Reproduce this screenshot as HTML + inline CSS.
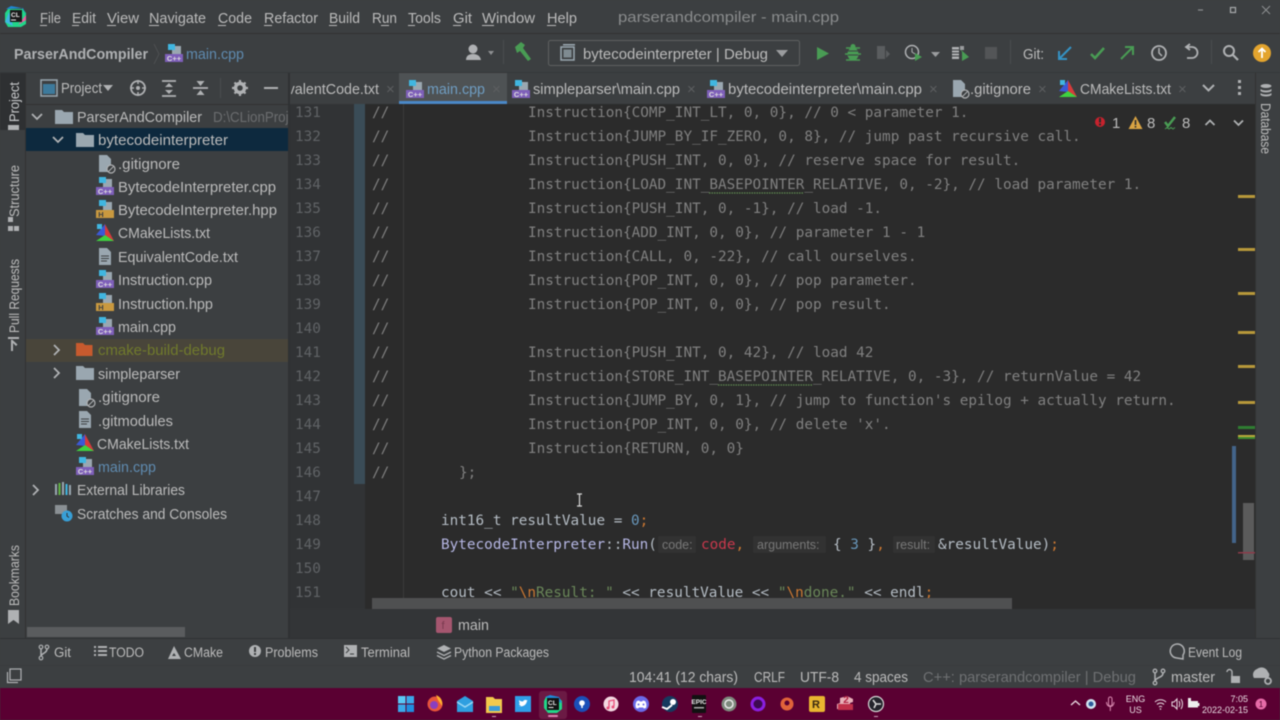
<!DOCTYPE html>
<html><head><meta charset="utf-8"><title>parserandcompiler - main.cpp</title>
<style>
html,body{margin:0;padding:0;width:1280px;height:720px;overflow:hidden;background:#3c3f41}
svg{display:block;filter:blur(.5px)}
text{font-family:"Liberation Sans",sans-serif;font-size:15px;fill:#bbbbbb;white-space:pre}
.c{font-family:"DejaVu Sans Mono","Liberation Mono",monospace;font-size:14.35px;fill:#808080}
.n{font-family:"DejaVu Sans Mono","Liberation Mono",monospace;font-size:14.35px;fill:#606366}
.w{fill:#b4bcc4}.o{fill:#cc7832}.b{fill:#6897bb}.g{fill:#6a8759}.f{fill:#b5b6e3}.r{fill:#c7384c}
.h{font-family:"Liberation Sans",sans-serif;font-size:12.5px;fill:#787878}
.x{fill:#5d5f61;font-size:15px}
.t{font-size:13.5px}
.s{stroke:#afb1b3;stroke-width:1.8;fill:none}
</style></head><body>
<svg width="1280" height="720" viewBox="0 0 1280 720" xmlns="http://www.w3.org/2000/svg">
<defs>
<g id="cpp"><rect x="7" y="2" width="9" height="8" fill="#9aa7b0"/><rect x="3" y="0" width="7" height="6" fill="#40b6e0"/><rect x="0" y="10" width="18" height="8" fill="#7e5fb9"/><text x="9" y="17" text-anchor="middle" style="font-size:7.5px;font-weight:bold;fill:#ddd">C++</text></g>
<g id="hpp"><rect x="7" y="2" width="9" height="8" fill="#9aa7b0"/><rect x="3" y="0" width="7" height="6" fill="#40b6e0"/><rect x="0" y="10" width="18" height="8" fill="#c9993f"/><text x="5" y="17" text-anchor="middle" style="font-size:7.5px;font-weight:bold;fill:#3c3f41">H</text></g>
<g id="cm"><polygon points="9,0 18,17 9,12" fill="#d63b3b"/><polygon points="9,0 0,11 9,12" fill="#3b58d6"/><polygon points="0,17 9,11 18,17" fill="#3fd13f"/><rect x="1" y="0" width="5" height="5" fill="#40b6e0"/></g>
<g id="folder"><path d="M0 1h7l2 2h9v12H0z" fill="#9aa7b0"/></g>
<g id="txt"><path d="M2 0h8l4 4v13H2z" fill="#9aa7b0"/><path d="M4 8h8M4 10.500h8M4 13h6" stroke="#3c3f41" stroke-width="1"/></g>
<g id="gi"><path d="M2 0h8l4 4v13H2z" fill="#9aa7b0"/><circle cx="14" cy="14" r="4" fill="#3c3f41" stroke="#afb1b3" stroke-width="1.200"/><path d="M11.500 16.500l5-5" stroke="#afb1b3" stroke-width="1"/></g>
<clipPath id="ed"><rect x="290" y="104" width="965" height="494"/></clipPath>
<clipPath id="tabs"><rect x="291" y="73" width="964" height="31"/></clipPath>
<clipPath id="tree"><rect x="25" y="104" width="263" height="530"/></clipPath>
</defs>

<rect width="1280" height="720" fill="#3c3f41"/>
<!-- title -->
<path d="M8 9h15l3 4v11l-5 3H8l-3-5V13z" fill="#21d789"/><path d="M6 9l5-3 11 2 4 7-3-7z" fill="#1e88d6"/><path d="M5 22l4-10 4 14z" fill="#40b6e0"/><path d="M18 25l8-5 0-5z" fill="#eb5ca0"/>
<rect x="10" y="10" width="12" height="12" fill="#1a1a1a"/><text x="11" y="17" style="font-size:6.500px;font-weight:bold;fill:#eee">CL</text><rect x="11" y="19.500" width="5" height="1" fill="#eee"/>
<g>
<text x="40" y="23" textLength="21" lengthAdjust="spacingAndGlyphs">File</text><rect x="40" y="25" width="7" height="1" fill="#bbb"/>
<text x="72" y="23" textLength="24" lengthAdjust="spacingAndGlyphs">Edit</text><rect x="72" y="25" width="7" height="1" fill="#bbb"/>
<text x="107" y="23" textLength="32" lengthAdjust="spacingAndGlyphs">View</text><rect x="107" y="25" width="9" height="1" fill="#bbb"/>
<text x="149" y="23" textLength="57" lengthAdjust="spacingAndGlyphs">Navigate</text><rect x="149" y="25" width="10" height="1" fill="#bbb"/>
<text x="218" y="23" textLength="34" lengthAdjust="spacingAndGlyphs">Code</text><rect x="218" y="25" width="8" height="1" fill="#bbb"/>
<text x="264" y="23" textLength="54" lengthAdjust="spacingAndGlyphs">Refactor</text><rect x="264" y="25" width="8" height="1" fill="#bbb"/>
<text x="329" y="23" textLength="31" lengthAdjust="spacingAndGlyphs">Build</text><rect x="329" y="25" width="8" height="1" fill="#bbb"/>
<text x="372" y="23" textLength="25" lengthAdjust="spacingAndGlyphs">Run</text><rect x="381" y="25" width="8" height="1" fill="#bbb"/>
<text x="408" y="23" textLength="33" lengthAdjust="spacingAndGlyphs">Tools</text><rect x="408" y="25" width="7" height="1" fill="#bbb"/>
<text x="453" y="23" textLength="19" lengthAdjust="spacingAndGlyphs">Git</text><rect x="453" y="25" width="8" height="1" fill="#bbb"/>
<text x="482" y="23" textLength="53" lengthAdjust="spacingAndGlyphs">Window</text><rect x="482" y="25" width="12" height="1" fill="#bbb"/>
<text x="547" y="23" textLength="30" lengthAdjust="spacingAndGlyphs">Help</text><rect x="547" y="25" width="9" height="1" fill="#bbb"/>
<text x="618" y="22" textLength="221" lengthAdjust="spacingAndGlyphs" style="fill:#8a8c8d">parserandcompiler - main.cpp</text>
</g>
<path d="M1198 10h5" stroke="#8d8f91" stroke-width="1.200"/><rect x="1230.500" y="7.500" width="5" height="5" fill="none" stroke="#a8aaac" stroke-width="1.200"/><path d="M1262 6l8 8M1270 6l-8 8" stroke="#8d8f91" stroke-width="1"/>
<rect x="0" y="33" width="1280" height="1" fill="#323232"/>

<!-- breadcrumb / toolbar -->
<text x="14" y="59" textLength="134" lengthAdjust="spacingAndGlyphs" style="font-weight:bold;fill:#afb1b3">ParserAndCompiler</text>
<path d="M154 44l5 10-5 10" stroke="#4e5052" fill="none"/>
<use href="#cpp" x="165" y="44"/>
<text x="186" y="59" textLength="58" lengthAdjust="spacingAndGlyphs" style="fill:#5f8bb0">main.cpp</text>
<circle cx="473" cy="49" r="4.500" fill="#afb1b3"/><path d="M466 60c0-5 4-6 7-6s7 1 8 6z" fill="#afb1b3"/><path d="M488 51l6 0-3 4z" fill="#8e9092"/>
<rect x="503" y="40" width="1" height="24" fill="#4a4d4f"/>
<path d="M515 47l6-5 4 3-2 3 8 11-3 2-8-10-3 2z" fill="#499c54"/>
<rect x="548.500" y="40.500" width="251" height="25" rx="2" fill="#3c3f41" stroke="#5e6060"/>
<rect x="561" y="47" width="13" height="13" fill="none" stroke="#9aa7b0" stroke-width="1.500"/><rect x="563.500" y="49.500" width="8" height="8" fill="#7f8b91"/><rect x="563" y="44" width="12" height="1.500" fill="#9aa7b0"/>
<text x="583" y="59" textLength="185" lengthAdjust="spacingAndGlyphs">bytecodeinterpreter | Debug</text>
<path d="M776 50h12l-6 7z" fill="#9a9c9e"/>
<path d="M817 47l12 6.500-12 6.500z" fill="#499c54"/>
<ellipse cx="853" cy="54" rx="5.500" ry="6.500" fill="#499c54"/><circle cx="853" cy="46.500" r="2.500" fill="#499c54"/><path d="M846 48l14 0M845 54h16M846 60l14-0" stroke="#499c54" stroke-width="1.500"/><path d="M848 51h10M848 55h10" stroke="#3c3f41" stroke-width="1"/>
<rect x="877" y="46" width="8" height="13" fill="#5a5d5f"/><path d="M886 50l4 4-4 4z" fill="#5a5d5f"/>
<circle cx="912" cy="52" r="6.500" fill="none" stroke="#afb1b3" stroke-width="1.500"/><path d="M912 48v4l3 2" stroke="#afb1b3" fill="none"/><path d="M915 53l7 4-7 4z" fill="#499c54"/>
<path d="M931 52h9l-4.500 5z" fill="#9a9c9e"/>
<rect x="952" y="47" width="7" height="12" fill="#afb1b3"/><path d="M952 50h7M952 53h7M952 56h7" stroke="#3c3f41"/><path d="M960 49l2 3v9l7-4z" fill="#499c54"/><rect x="960" y="46" width="4" height="4" fill="#9a9c9e"/>
<rect x="985" y="47" width="12" height="12" fill="#535557"/>
<rect x="1010" y="40" width="1" height="24" fill="#4a4d4f"/>
<text x="1023" y="59" textLength="21" lengthAdjust="spacingAndGlyphs">Git:</text>
<path d="M1071 47l-12 12M1059 51v8h8" fill="none" stroke="#3592c4" stroke-width="2"/>
<path d="M1091 54l4 4 9-10" fill="none" stroke="#499c54" stroke-width="2.500"/>
<path d="M1121 59l12-12M1125 47h8v8" fill="none" stroke="#499c54" stroke-width="2"/>
<circle cx="1159" cy="53" r="7" fill="none" stroke="#afb1b3" stroke-width="1.800"/><path d="M1159 48v5l3 3" fill="none" stroke="#afb1b3" stroke-width="1.500"/>
<path d="M1187 47h5a5.500 5.500 0 0 1 0 11h-5M1190 44l-4 3 4 3" class="s"/>
<rect x="1211" y="40" width="1" height="24" fill="#4a4d4f"/>
<circle cx="1229" cy="51" r="5" class="s" style="stroke-width:2"/><path d="M1233 55l5 5" class="s" style="stroke-width:2.200"/>
<circle cx="1262" cy="53" r="9" fill="#e3a42e"/><path d="M1262 58v-9M1258.500 52l3.500-3.500 3.500 3.500" stroke="#fff" stroke-width="1.800" fill="none"/>
<rect x="0" y="72" width="1280" height="1" fill="#35383a"/>

<!-- left strip -->
<rect x="0" y="73" width="25" height="57" fill="#2e3032"/>
<text transform="translate(19,122) rotate(-90)" textLength="40" lengthAdjust="spacingAndGlyphs" style="font-size:13.5px;fill:#c6c8ca">Project</text>
<rect x="8" y="125" width="11" height="5" fill="#afb1b3"/>
<text transform="translate(19,217) rotate(-90)" textLength="52" lengthAdjust="spacingAndGlyphs" style="font-size:13.5px">Structure</text>
<path d="M8 222h5v-5h-5z M14 226h5v5h-5z M8 226h5v5h-5z" fill="#afb1b3"/>
<text transform="translate(19,333) rotate(-90)" textLength="74" lengthAdjust="spacingAndGlyphs" style="font-size:13.5px">Pull Requests</text>
<path d="M8 337h11v2H8zM11 340v11h2v-8l3 3 1.500-1.500-5.500-5z" fill="#afb1b3"/>
<text transform="translate(19,606) rotate(-90)" textLength="61" lengthAdjust="spacingAndGlyphs" style="font-size:13.5px">Bookmarks</text>
<path d="M8 610h11v14l-5.500-4-5.500 4z" fill="#afb1b3"/>
<rect x="25" y="73" width="1" height="565" fill="#323232"/>

<!-- project header -->
<rect x="41" y="80" width="16" height="16" fill="none" stroke="#9aa7b0" stroke-width="1.500"/><rect x="43" y="84" width="12" height="10" fill="#3d7a9c"/>
<text x="61" y="93" textLength="41" lengthAdjust="spacingAndGlyphs">Project</text>
<path d="M103 85h10l-5 6z" fill="#afb1b3"/>
<circle cx="138" cy="88" r="7" fill="none" stroke="#afb1b3" stroke-width="1.800"/><circle cx="138" cy="88" r="2" fill="#afb1b3"/><path d="M138 80v4M138 92v4M130 88h4M142 88h4" stroke="#afb1b3" stroke-width="1.500"/>
<path d="M162 81h14M162 96h14" stroke="#afb1b3" stroke-width="1.800"/><path d="M169 83l-4 4h8zM169 94l-4-4h8z" fill="#afb1b3"/>
<path d="M193 88h15" stroke="#afb1b3" stroke-width="1.800"/><path d="M200.500 86l-4-5h8zM200.500 90l-4 5h8z" fill="#afb1b3"/>
<rect x="220" y="78" width="1" height="20" fill="#4a4d4f"/>
<circle cx="240" cy="88" r="4.500" fill="none" stroke="#afb1b3" stroke-width="3.500"/><path d="M240 80v3M240 93v3M232 88h3M245 88h3M234.500 82.500l2 2M243.500 91.500l2 2M245.500 82.500l-2 2M236.500 91.500l-2 2" stroke="#afb1b3" stroke-width="2.200"/>
<path d="M264 88h14" stroke="#afb1b3" stroke-width="2"/>

<!-- tree -->
<rect x="26" y="104" width="262" height="1" fill="#323232"/>
<g clip-path="url(#tree)">
<rect x="26" y="128" width="262" height="23" fill="#0d293e"/>
<rect x="26" y="339" width="262" height="23" fill="#49453a"/>
<path d="M32 114l5 5 5-5" class="s"/>
<use href="#folder" x="55" y="109"/>
<text x="77" y="122" textLength="125" lengthAdjust="spacingAndGlyphs">ParserAndCompiler</text>
<text x="213" y="122" textLength="100" lengthAdjust="spacingAndGlyphs" style="fill:#6b6d6f">D:\CLionProjects</text>
<path d="M53 137l5 5 5-5" class="s"/>
<use href="#folder" x="76" y="132"/>
<text x="98" y="145" textLength="130" lengthAdjust="spacingAndGlyphs">bytecodeinterpreter</text>
<use href="#gi" x="97" y="155"/><text x="118" y="169" textLength="62" lengthAdjust="spacingAndGlyphs">.gitignore</text>
<use href="#cpp" x="96" y="177"/><text x="118" y="192" textLength="158" lengthAdjust="spacingAndGlyphs">BytecodeInterpreter.cpp</text>
<use href="#hpp" x="96" y="200"/><text x="118" y="215" textLength="159" lengthAdjust="spacingAndGlyphs">BytecodeInterpreter.hpp</text>
<use href="#cm" x="96" y="224"/><text x="118" y="238" textLength="92" lengthAdjust="spacingAndGlyphs">CMakeLists.txt</text>
<use href="#txt" x="97" y="248"/><text x="118" y="262" textLength="120" lengthAdjust="spacingAndGlyphs">EquivalentCode.txt</text>
<use href="#cpp" x="96" y="270"/><text x="118" y="285" textLength="94" lengthAdjust="spacingAndGlyphs">Instruction.cpp</text>
<use href="#hpp" x="96" y="293"/><text x="118" y="309" textLength="95" lengthAdjust="spacingAndGlyphs">Instruction.hpp</text>
<use href="#cpp" x="96" y="317"/><text x="118" y="332" textLength="58" lengthAdjust="spacingAndGlyphs">main.cpp</text>
<path d="M54 345l5 5-5 5" class="s"/>
<g fill="#c75a2e"><path d="M76 343h7l2 2h7.500v11H76z"/></g>
<text x="98" y="355" textLength="127" lengthAdjust="spacingAndGlyphs" style="fill:#707a2c">cmake-build-debug</text>
<path d="M54 368l5 5-5 5" class="s"/>
<use href="#folder" x="76" y="365"/>
<text x="98" y="379" textLength="82" lengthAdjust="spacingAndGlyphs">simpleparser</text>
<use href="#gi" x="77" y="389"/><text x="98" y="402" textLength="62" lengthAdjust="spacingAndGlyphs">.gitignore</text>
<use href="#txt" x="77" y="411"/><text x="98" y="426" textLength="75" lengthAdjust="spacingAndGlyphs">.gitmodules</text>
<use href="#cm" x="76" y="434"/><text x="97" y="449" textLength="92" lengthAdjust="spacingAndGlyphs">CMakeLists.txt</text>
<use href="#cpp" x="76" y="457"/><text x="98" y="472" textLength="58" lengthAdjust="spacingAndGlyphs" style="fill:#5f8bb0">main.cpp</text>
<path d="M33 485l5 5-5 5" class="s"/>
<rect x="55" y="484" width="2" height="11" fill="#9aa7b0"/><rect x="58.500" y="483" width="2" height="12" fill="#62b543"/><rect x="62" y="482" width="2" height="13" fill="#9aa7b0"/><rect x="65.500" y="484" width="2" height="11" fill="#40b6e0"/><rect x="69" y="485" width="2" height="10" fill="#9aa7b0"/>
<text x="77" y="495" textLength="108" lengthAdjust="spacingAndGlyphs">External Libraries</text>
<path d="M55 505h12v9H55z" fill="#8a9094"/><circle cx="67" cy="516" r="5.500" fill="#389fd6"/><path d="M67 513v3l2 1.500" stroke="#2e3032" fill="none"/>
<text x="77" y="519" textLength="150" lengthAdjust="spacingAndGlyphs">Scratches and Consoles</text>
</g>
<rect x="27" y="627" width="158" height="10" fill="#5a5c5e"/>
<rect x="288" y="73" width="2" height="565" fill="#2f3133"/>

<!-- tabs -->
<g clip-path="url(#tabs)">
<rect x="399" y="73" width="108" height="31" fill="#4e5254"/>
<rect x="399" y="101" width="108" height="3" fill="#4a88c7"/>
<text x="259" y="94" textLength="120" lengthAdjust="spacingAndGlyphs">EquivalentCode.txt</text>
<text x="386" y="94" class="x">×</text>
<g><use href="#cpp" x="406" y="80"/></g>
<text x="427" y="94" textLength="58" lengthAdjust="spacingAndGlyphs" style="fill:#6f9dc2">main.cpp</text>
<text x="492" y="94" class="x">×</text>
<use href="#cpp" x="512" y="80"/>
<text x="533" y="94" textLength="147" lengthAdjust="spacingAndGlyphs">simpleparser\main.cpp</text>
<text x="687" y="94" class="x">×</text>
<use href="#cpp" x="707" y="80"/>
<text x="728" y="94" textLength="194" lengthAdjust="spacingAndGlyphs">bytecodeinterpreter\main.cpp</text>
<text x="929" y="94" class="x">×</text>
<use href="#gi" x="951" y="80"/>
<text x="970" y="94" textLength="61" lengthAdjust="spacingAndGlyphs">.gitignore</text>
<text x="1038" y="94" class="x">×</text>
<use href="#cm" x="1059" y="80"/>
<text x="1080" y="94" textLength="91" lengthAdjust="spacingAndGlyphs">CMakeLists.txt</text>
<text x="1178" y="94" class="x">×</text>
</g>
<path d="M1203 85l5.500 5.500 5.500-5.500" class="s" style="stroke-width:2"/>
<rect x="1238" y="80" width="3" height="3" fill="#afb1b3"/><rect x="1238" y="86" width="3" height="3" fill="#afb1b3"/><rect x="1238" y="92" width="3" height="3" fill="#afb1b3"/>

<!-- editor -->
<rect x="290" y="104" width="965" height="505" fill="#2b2b2b"/>
<rect x="290" y="104" width="75" height="505" fill="#313335"/>
<rect x="354" y="104" width="11" height="380" fill="#3a4c57"/>
<rect x="403" y="104" width="1" height="505" fill="#3a3a3a"/>
<g clip-path="url(#ed)">
<text class="n" x="295" y="117">131</text><text class="n" x="295" y="141">132</text><text class="n" x="295" y="165">133</text><text class="n" x="295" y="189">134</text><text class="n" x="295" y="213">135</text><text class="n" x="295" y="237">136</text><text class="n" x="295" y="261">137</text><text class="n" x="295" y="285">138</text><text class="n" x="295" y="309">139</text><text class="n" x="295" y="333">140</text><text class="n" x="295" y="357">141</text><text class="n" x="295" y="381">142</text><text class="n" x="295" y="405">143</text><text class="n" x="295" y="429">144</text><text class="n" x="295" y="453">145</text><text class="n" x="295" y="477">146</text><text class="n" x="295" y="501">147</text><text class="n" x="295" y="525">148</text><text class="n" x="295" y="549">149</text><text class="n" x="295" y="573">150</text><text class="n" x="295" y="597">151</text>
<text class="c" x="372" y="117">//</text><text class="c" x="528" y="117">Instruction{COMP_INT_LT, 0, 0}, // 0 &lt; parameter 1.</text>
<text class="c" x="372" y="141">//</text><text class="c" x="528" y="141">Instruction{JUMP_BY_IF_ZERO, 0, 8}, // jump past recursive call.</text>
<text class="c" x="372" y="165">//</text><text class="c" x="528" y="165">Instruction{PUSH_INT, 0, 0}, // reserve space for result.</text>
<text class="c" x="372" y="189">//</text><text class="c" x="528" y="189">Instruction{LOAD_INT_BASEPOINTER_RELATIVE, 0, -2}, // load parameter 1.</text>
<text class="c" x="372" y="213">//</text><text class="c" x="528" y="213">Instruction{PUSH_INT, 0, -1}, // load -1.</text>
<text class="c" x="372" y="237">//</text><text class="c" x="528" y="237">Instruction{ADD_INT, 0, 0}, // parameter 1 - 1</text>
<text class="c" x="372" y="261">//</text><text class="c" x="528" y="261">Instruction{CALL, 0, -22}, // call ourselves.</text>
<text class="c" x="372" y="285">//</text><text class="c" x="528" y="285">Instruction{POP_INT, 0, 0}, // pop parameter.</text>
<text class="c" x="372" y="309">//</text><text class="c" x="528" y="309">Instruction{POP_INT, 0, 0}, // pop result.</text>
<text class="c" x="372" y="333">//</text>
<text class="c" x="372" y="357">//</text><text class="c" x="528" y="357">Instruction{PUSH_INT, 0, 42}, // load 42</text>
<text class="c" x="372" y="381">//</text><text class="c" x="528" y="381">Instruction{STORE_INT_BASEPOINTER_RELATIVE, 0, -3}, // returnValue = 42</text>
<text class="c" x="372" y="405">//</text><text class="c" x="528" y="405">Instruction{JUMP_BY, 0, 1}, // jump to function's epilog + actually return.</text>
<text class="c" x="372" y="429">//</text><text class="c" x="528" y="429">Instruction{POP_INT, 0, 0}, // delete 'x'.</text>
<text class="c" x="372" y="453">//</text><text class="c" x="528" y="453">Instruction{RETURN, 0, 0}</text>
<text class="c" x="372" y="477">//</text><text class="c" x="459" y="477">};</text>
<path d="M709 193h95M718 385h95" stroke="#5f8a4f" stroke-width="1.300" stroke-dasharray="1.500 1"/>
<text class="c w" x="441" y="525">int16_t resultValue = <tspan class="b">0</tspan><tspan class="o">;</tspan></text>
<text class="c f" x="441" y="549">BytecodeInterpreter<tspan class="w">::</tspan>Run<tspan class="w">(</tspan></text>
<rect x="658" y="536" width="38" height="17" rx="2" fill="#323232"/><text class="h" x="662" y="549">code:</text>
<text class="c r" x="701" y="549">code<tspan class="o">,</tspan></text>
<rect x="753" y="536" width="73" height="17" rx="2" fill="#323232"/><text class="h" x="757" y="549">arguments:</text>
<text class="c w" x="833" y="549">{ <tspan class="b">3</tspan> }<tspan class="o">,</tspan></text>
<rect x="893" y="536" width="42" height="17" rx="2" fill="#323232"/><text class="h" x="896" y="549">result:</text>
<text class="c w" x="938" y="549">&amp;resultValue)<tspan class="o">;</tspan></text>
<text class="c w" x="441" y="597">cout &lt;&lt; <tspan class="g">"</tspan><tspan class="o">\</tspan><tspan class="o">n</tspan><tspan class="g">Result: "</tspan> &lt;&lt; resultValue &lt;&lt; <tspan class="g">"</tspan><tspan class="o">\n</tspan><tspan class="g">done."</tspan> &lt;&lt; endl<tspan class="o">;</tspan></text>
</g>
<rect x="372" y="598" width="640" height="11" fill="#4f5051"/>
<!-- cursor -->
<path d="M577 494h5M577 506h5M579.500 494v12" stroke="#d8d8d8" stroke-width="1.200" fill="none"/>
<!-- inspection -->
<circle cx="1100" cy="122" r="5" fill="#c7222d"/><rect x="1099" y="118" width="2" height="4.500" fill="#2b2b2b"/><rect x="1099" y="123.500" width="2" height="2" fill="#2b2b2b"/>
<text x="1112" y="128" style="fill:#bbb">1</text>
<path d="M1135.500 116l7 13h-14z" fill="#d9a343"/><rect x="1134.700" y="120" width="1.600" height="5" fill="#2b2b2b"/><rect x="1134.700" y="126" width="1.600" height="1.600" fill="#2b2b2b"/>
<text x="1147" y="128" style="fill:#bbb">8</text>
<path d="M1165 122l3 4 7-9" fill="none" stroke="#499c54" stroke-width="2.500"/><path d="M1165 129l2-1.500 2 1.500 2-1.500 2 1.500 2-1.500" fill="none" stroke="#499c54" stroke-width="1"/>
<text x="1182" y="128" style="fill:#bbb">8</text>
<path d="M1205.500 125l4.500-4.500 4.500 4.500" class="s"/><path d="M1234 120.500l4.500 4.500 4.500-4.500" class="s"/>
<!-- stripes -->
<g fill="#b8983a"><rect x="1238" y="195" width="17" height="3"/><rect x="1238" y="248" width="17" height="3"/><rect x="1238" y="292" width="17" height="3"/><rect x="1238" y="331" width="17" height="3"/><rect x="1238" y="365" width="17" height="3"/><rect x="1238" y="401" width="17" height="3"/></g>
<rect x="1238" y="426" width="17" height="3" fill="#2f7d32"/><rect x="1238" y="435" width="17" height="2" fill="#b8a83a"/><rect x="1238" y="437" width="17" height="2" fill="#3f8c2f"/>
<rect x="1232" y="446" width="4" height="97" fill="#43648a"/>
<rect x="1243" y="503" width="11" height="57" fill="#5b5b5b"/>
<rect x="1238" y="552" width="17" height="1.500" fill="#8c3b4a"/>

<!-- right strip -->
<rect x="1255" y="73" width="25" height="565" fill="#3c3f41"/>
<rect x="1255" y="73" width="1" height="565" fill="#323232"/>
<ellipse cx="1266" cy="86" rx="5.500" ry="2" fill="#afb1b3"/><path d="M1260.500 89c2 2 9 2 11 0v2c-2 2-9 2-11 0zM1260.500 93c2 2 9 2 11 0v2c-2 2-9 2-11 0z" fill="#afb1b3"/>
<text transform="translate(1261,103) rotate(90)" textLength="51" lengthAdjust="spacingAndGlyphs" style="font-size:13.5px">Database</text>

<!-- bottom breadcrumb -->
<rect x="290" y="609" width="965" height="29" fill="#333537"/>
<rect x="436" y="617" width="16" height="16" rx="2" fill="#a5566f"/><text x="441.500" y="629" style="font-size:11px;fill:#7a3a50">f</text>
<text x="458" y="630" textLength="31" lengthAdjust="spacingAndGlyphs">main</text>
<rect x="0" y="638" width="1280" height="1" fill="#2f3133"/>

<!-- tool windows -->
<g class="t">
<circle cx="41" cy="647" r="1.800" class="s" style="stroke-width:1.200"/><circle cx="41" cy="658" r="1.800" class="s" style="stroke-width:1.200"/><circle cx="47" cy="647" r="1.800" class="s" style="stroke-width:1.200"/><path d="M41 649v7M47 649c0 4-5 4-6 7" class="s" style="stroke-width:1.500"/>
<text x="54" y="657" textLength="17" lengthAdjust="spacingAndGlyphs" style="font-size:13.5px">Git</text>
<path d="M94 647h2M98 647h9M94 651h2M98 651h9M94 655h2M98 655h9" stroke="#afb1b3" stroke-width="2"/>
<text x="109" y="657" textLength="35" lengthAdjust="spacingAndGlyphs" style="font-size:13.5px">TODO</text>
<path d="M174 646l7 13h-13z" fill="#afb1b3"/><path d="M174 653l2 3h-4z" fill="#3c3f41"/>
<text x="184" y="657" textLength="39" lengthAdjust="spacingAndGlyphs" style="font-size:13.5px">CMake</text>
<circle cx="255" cy="651" r="6" fill="#afb1b3"/><rect x="254" y="647" width="2" height="5" fill="#3c3f41"/><rect x="254" y="653" width="2" height="2" fill="#3c3f41"/>
<text x="265" y="657" textLength="53" lengthAdjust="spacingAndGlyphs" style="font-size:13.5px">Problems</text>
<rect x="344" y="645" width="13" height="12" fill="#afb1b3"/><path d="M346 647l3 3-3 3M350 654h4" stroke="#3c3f41" fill="none"/>
<text x="361" y="657" textLength="49" lengthAdjust="spacingAndGlyphs" style="font-size:13.5px">Terminal</text>
<path d="M444 645l7 3.500-7 3.500-7-3.500z" fill="#afb1b3"/><path d="M437 652l7 3.500 7-3.500M437 655.500l7 3.500 7-3.500" class="s" style="stroke-width:1.300"/>
<text x="454" y="657" textLength="95" lengthAdjust="spacingAndGlyphs" style="font-size:13.5px">Python Packages</text>
<path d="M1177 658a7 7 0 1 1 6-3v4z" fill="none" stroke="#afb1b3" stroke-width="1.500"/>
<text x="1188" y="657" textLength="54" lengthAdjust="spacingAndGlyphs" style="font-size:13.5px">Event Log</text>
</g>

<!-- status -->
<rect x="0" y="665" width="1280" height="1" fill="#383b3d"/>
<rect x="10" y="669" width="11" height="11" fill="none" stroke="#afb1b3" stroke-width="1.200"/><path d="M7.500 672v10.500H18" fill="none" stroke="#afb1b3" stroke-width="1.200"/>
<text x="629" y="682" textLength="109" lengthAdjust="spacingAndGlyphs">104:41 (12 chars)</text>
<text x="754" y="682" textLength="31" lengthAdjust="spacingAndGlyphs">CRLF</text>
<text x="800" y="682" textLength="39" lengthAdjust="spacingAndGlyphs">UTF-8</text>
<text x="854" y="682" textLength="54" lengthAdjust="spacingAndGlyphs">4 spaces</text>
<text x="923" y="682" textLength="213" lengthAdjust="spacingAndGlyphs" style="fill:#6f7173">C++: parserandcompiler | Debug</text>
<circle cx="1155" cy="671" r="1.800" class="s" style="stroke-width:1.300"/><circle cx="1155" cy="683" r="1.800" class="s" style="stroke-width:1.300"/><circle cx="1163" cy="671" r="1.800" class="s" style="stroke-width:1.300"/><path d="M1155 673v8M1163 673c0 5-7 4-8 8" class="s" style="stroke-width:1.500"/>
<text x="1171" y="682" textLength="44" lengthAdjust="spacingAndGlyphs">master</text>
<rect x="1231" y="676" width="9" height="7" fill="#afb1b3"/><path d="M1232 676v-4a2.500 2.500 0 0 0-5 0" class="s" style="stroke-width:1.400"/>
<path d="M1254 678a6 6 0 0 1 3-9 7 7 0 0 1 11 3 4 4 0 0 1 0 6z" fill="#afb1b3"/><circle cx="1268" cy="681" r="3" fill="#3c3f41" stroke="#afb1b3" stroke-width="1.800"/>

<!-- taskbar -->
<rect x="0" y="688" width="1280" height="32" fill="#5a0032"/>
<rect x="539" y="691" width="28" height="28" rx="3" fill="#6b1a44"/>
<rect x="552" y="715" width="10" height="2" rx="1" fill="#e07fb0" transform="translate(-4,0)"/>
<g fill="#4fc3f7"><rect x="398" y="696" width="7.500" height="7.500" fill="#5ac8f5"/><rect x="406.500" y="696" width="7.500" height="7.500" fill="#3aa8ea"/><rect x="398" y="704.500" width="7.500" height="7.500" fill="#3aa8ea"/><rect x="406.500" y="704.500" width="7.500" height="7.500" fill="#1f8ee0"/></g>
<circle cx="435" cy="704" r="7.500" fill="#e8553a"/><circle cx="434" cy="705" r="4" fill="#8a3fc0"/><path d="M436 695c5 2 7 6 6 11l-4-6z" fill="#ffb02e"/>
<path d="M457 701l8-5 8 5v11h-16z" fill="#2e9fe0"/><path d="M457 702l8 5 8-5" fill="none" stroke="#9bd8f5" stroke-width="1.500"/>
<path d="M486 697h7l2 2h7v14h-16z" fill="#f2c94c"/><rect x="489" y="706" width="11" height="5" fill="#3a9bd8"/>
<rect x="515" y="696" width="16" height="16" fill="#2f9fe8"/><path d="M519 706c3 1 7 0 8-5l1-1-1 .5c-1-1-3-1-4 1-2 0-3-.5-4-1.500 0 2 .5 3 1 3.500l-1 0c0 1 1 2 2 2.500-1 0-2 .5-2 .5z" fill="#fff"/>
<path d="M546 697h12l4 4v8l-5 4h-9l-4-5v-7z" fill="#21d789"/><path d="M545 697l5-2 9 2 3 6z" fill="#1e88d6"/><rect x="547" y="698" width="12" height="12" fill="#111"/><text x="548" y="705" style="font-size:6.500px;font-weight:bold;fill:#eee">CL</text><rect x="548.500" y="707" width="5" height="1" fill="#eee"/>
<circle cx="582" cy="704" r="8" fill="#1a4fb8"/><circle cx="582" cy="703" r="2.800" fill="#fff"/><path d="M582 708v-3" stroke="#fff" stroke-width="1.500"/>
<circle cx="611" cy="704" r="7.500" fill="#f4d9e2"/><path d="M609 708v-7l5-1v6" fill="none" stroke="#e84f7a" stroke-width="1.300"/><circle cx="608" cy="708" r="1.500" fill="#e84f7a"/><circle cx="613" cy="707" r="1.500" fill="#e84f7a"/>
<circle cx="641" cy="704" r="8" fill="#6a6ae8"/><path d="M636 708c-1-3 0-6 1-7l2-.5 1 1h2l1-1 2 .5c1 1 2 4 1 7l-2 .5-1-1h-4l-1 1z" fill="#fff"/><circle cx="638.500" cy="704.500" r="1" fill="#6a6ae8"/><circle cx="643.500" cy="704.500" r="1" fill="#6a6ae8"/>
<circle cx="670" cy="704" r="8" fill="#16395e"/><path d="M662 707l5 2 5-4" fill="none" stroke="#fff" stroke-width="2"/><circle cx="673" cy="702" r="3" fill="#fff"/>
<rect x="692" y="695" width="14" height="18" rx="1" fill="#111"/><text x="699" y="704" text-anchor="middle" style="font-size:6.500px;font-weight:bold;fill:#eee">EPIC</text><rect x="694" y="707" width="10" height="1.500" fill="#aaa"/>
<circle cx="729" cy="704" r="7.500" fill="#7d8a7d"/><circle cx="729" cy="704" r="4" fill="none" stroke="#e8e8e8" stroke-width="1.500"/>
<circle cx="758" cy="704" r="6" fill="#3d0a50" stroke="#8a1fe0" stroke-width="3"/>
<circle cx="787" cy="704" r="6.500" fill="#e0633a"/><circle cx="787" cy="703" r="2.500" fill="#5a0032"/>
<rect x="809" y="696" width="16" height="16" rx="2" fill="#e8b530"/><text x="812" y="708" style="font-size:11px;font-weight:bold;fill:#3a2a10">R</text>
<path d="M840 698l7-2 6 3v3l-3 1v6h-13v-5l3-1z" fill="#e8b0b8"/><rect x="838" y="704" width="15" height="6" fill="#c0304a"/><text x="846" y="703" text-anchor="middle" style="font-size:10px;font-weight:bold;fill:#b02040">2</text>
<circle cx="876" cy="704" r="7.500" fill="#24242c" stroke="#d8d8d8" stroke-width="1.200"/><path d="M876 704l-3-4M876 704l5 0M876 704l-2 4" stroke="#d8d8d8" stroke-width="1.600"/>
<rect x="492" y="716" width="4" height="1" fill="#c9a0b4"/><rect x="698" y="716" width="4" height="1" fill="#c9a0b4"/><rect x="874" y="716" width="4" height="1" fill="#c9a0b4"/>

<path d="M1071 705l4.500-4 4.500 4" fill="none" stroke="#e8d8e0" stroke-width="1.400"/>
<circle cx="1091" cy="704" r="5" fill="#d0e4f0"/><circle cx="1091" cy="704" r="2.500" fill="#2c5c9c"/>
<rect x="1108.500" y="697" width="3.500" height="9" rx="1.700" fill="none" stroke="#d98ab0" stroke-width="1"/><path d="M1106.500 702c0 6 7.500 6 7.500 0M1110.300 707v4" fill="none" stroke="#d98ab0"/>
<text x="1135.500" y="702" text-anchor="middle" style="font-size:9px;fill:#e8dce2">ENG</text><text x="1135.500" y="713" text-anchor="middle" style="font-size:9px;fill:#e8dce2">US</text>
<path d="M1155 702c3-3 8-3 11 0M1157 704.500c2-2 5-2 7 0M1159 707c1-1 2-1 3 0" fill="none" stroke="#e8dce2"/><circle cx="1160.500" cy="709" r=".8" fill="#e8dce2"/>
<path d="M1172 702h2l3-3v10l-3-3h-2zM1179 701c1 2 1 4 0 6M1181 699c2 3 2 7 0 10" fill="none" stroke="#e8dce2"/>
<rect x="1188" y="701" width="10" height="6.500" fill="#eee"/><rect x="1198" y="703" width="1.500" height="3" fill="#eee"/><rect x="1188" y="698" width="3" height="3" fill="#eee"/>
<text x="1248" y="702" text-anchor="end" style="font-size:9px;fill:#e8dce2">7:05</text>
<text x="1248" y="713" text-anchor="end" style="font-size:9px;fill:#e8dce2">2022-02-15</text>
<circle cx="1261" cy="704" r="5.500" fill="#e66ba8"/><text x="1261" y="707" text-anchor="middle" style="font-size:8px;fill:#4a0028">1</text>
</svg>
</body></html>
